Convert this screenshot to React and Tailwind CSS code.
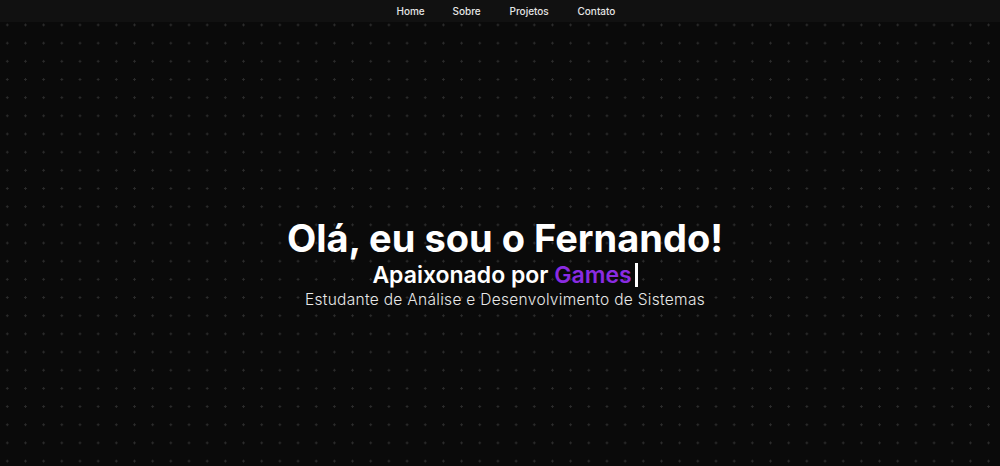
export default function App() {
  return (
    <div
      className="min-h-[466px] w-full bg-[#0a0a0a] bg-[radial-gradient(circle,#2c2c2c_1px,transparent_1.3px)] bg-[length:18.18px_18.18px] bg-[position:-1.8px_-2.3px] text-white flex flex-col pl-[10px]"
      style={{ fontFamily: 'Inter, "Noto Sans", sans-serif' }}
    >
      <nav className="h-[22px] bg-[#111111] flex items-center justify-center gap-[31px] text-[10px] font-medium text-[#e5e5e5] ml-[-10px] pl-[10px]">
        <a className="w-[25px] text-center">Home</a>
        <a className="w-[26px] text-center">Sobre</a>
        <a className="w-[37px] text-center">Projetos</a>
        <a className="w-[36px] text-center">Contato</a>
      </nav>
      <main className="flex flex-col items-center pt-[193px]">
        <h1 className="text-[38px] leading-[46px] font-bold">Olá, eu sou o Fernando!</h1>
        <h2 className="text-[23px] leading-[28px] font-semibold mt-[0px] flex items-center">
          Apaixonado por&nbsp;<span className="text-[#8a2be2]">Games</span>
          <span className="inline-block w-[3px] h-[24px] bg-white ml-[3px]"></span>
        </h2>
        <p className="text-[15.5px] leading-[20px] font-light text-[#e8e8e8] tracking-[0.3px] mt-[1px]">
          Estudante de Análise e Desenvolvimento de Sistemas
        </p>
      </main>
    </div>
  );
}
